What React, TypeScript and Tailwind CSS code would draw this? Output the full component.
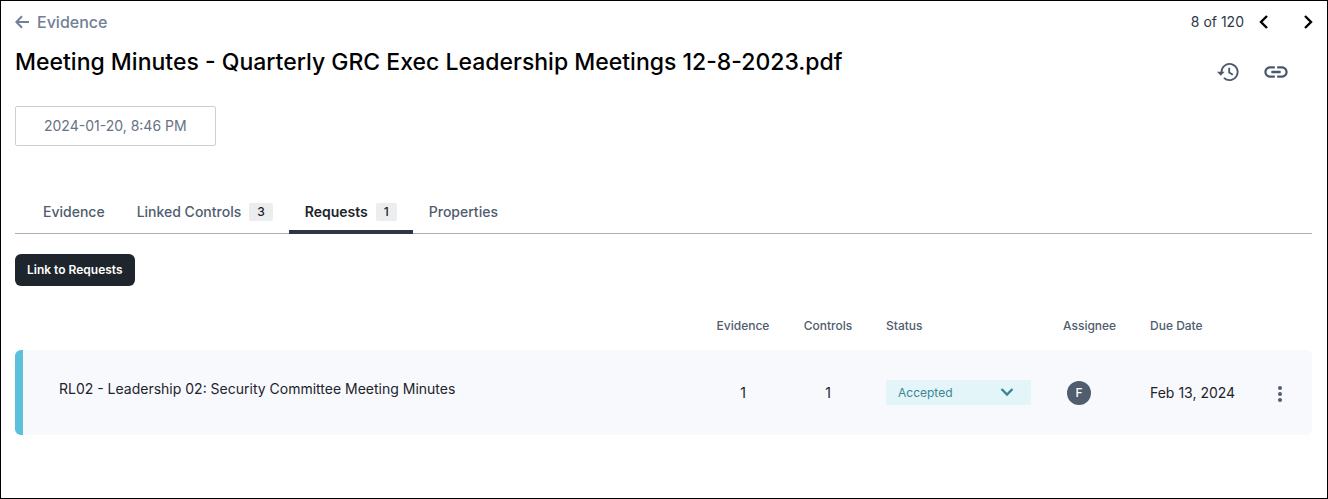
import React, { FC } from "react";
import { MdInsertLink } from "react-icons/md";

type Tab = { name: string; count?: number };

type RequestRow = {
	title: string;
	evidence: number;
	controls: number;
	status: string;
	assignee: string;
	dueDate: string;
};

const tabs: Tab[] = [
	{ name: "Evidence" },
	{ name: "Linked Controls", count: 3 },
	{ name: "Requests", count: 1 },
	{ name: "Properties" },
];

const requests: RequestRow[] = [
	{
		title: "RL02 - Leadership 02: Security Committee Meeting Minutes",
		evidence: 1,
		controls: 1,
		status: "Accepted",
		assignee: "F",
		dueDate: "Feb 13, 2024",
	},
];

const Chevron: FC<{ d: string; className: string }> = ({ d, className }) => (
	<svg viewBox="0 0 16 16" fill="none" stroke="currentColor" strokeWidth="2.4" className={className}>
		<path d={d} />
	</svg>
);

const HistoryIcon = () => (
	<svg viewBox="0 0 24 24" fill="none" stroke="currentColor" strokeWidth="1.8" className="size-6">
		<path d="M5.5 12.5a8.1 8.1 0 1 1 2.4 5.3" />
		<path d="M13.2 7.8v4.6l3.6 2.4" />
		<path d="M1 11.8h7.6L4.8 15.8z" fill="currentColor" stroke="none" />
	</svg>
);

const Header = () => (
	<header>
		<div className="flex h-[41px] items-center justify-between">
			<a href="#evidence" className="flex items-center gap-2 text-base font-medium text-[#718096]">
				<svg viewBox="0 0 14 14" fill="none" stroke="currentColor" strokeWidth="2" className="size-3.5">
					<path d="M14 7H1.5M7 1.3 1.3 7 7 12.7" />
				</svg>
				Evidence
			</a>
			<div className="-mr-1 flex items-center text-sm text-[#2d3748]">
				<span className="mr-3">8 of 120</span>
				<button aria-label="Previous" className="mr-7 text-black">
					<Chevron d="M11 2 5 8l6 6" className="size-4" />
				</button>
				<button aria-label="Next" className="text-black">
					<Chevron d="M5 2l6 6-6 6" className="size-4" />
				</button>
			</div>
		</div>
		<div className="flex justify-between">
			<h1 className="text-[23px] leading-10 font-medium text-black">
				Meeting Minutes - Quarterly GRC Exec Leadership Meetings 12-8-2023.pdf
			</h1>
			<div className="mt-4 mr-[22px] flex items-center gap-[22px] text-[#4a5a6c]">
				<button aria-label="History">
					<HistoryIcon />
				</button>
				<button aria-label="Copy link">
					<MdInsertLink className="size-7" />
				</button>
			</div>
		</div>
	</header>
);

const Tabs: FC<{ active: string }> = ({ active }) => (
	<nav role="tablist" className="mt-11 flex border-b border-[#a5afb9] pl-3">
		{tabs.map(({ name, count }) => (
			<button
				key={name}
				role="tab"
				aria-selected={name === active}
				className={
					name === active
						? "-mb-px flex h-11 items-center gap-2 border-b-4 border-[#2d3642] px-4 pt-1 text-sm font-semibold text-[#1d232b]"
						: "flex h-10 items-center gap-2 px-4 pt-1 text-sm font-medium text-[#4f5d6e]"
				}
			>
				{name}
				{count && (
					<span className="rounded-xs bg-[#ecedef] px-2 text-xs leading-[18px] font-medium text-[#1d232b]">
						{count}
					</span>
				)}
			</button>
		))}
	</nav>
);

const RequestsTable = () => (
	<table className="mt-8 w-full table-fixed border-separate border-spacing-0">
		<thead>
			<tr className="h-8 text-left align-top text-xs text-[#4f5d6e]">
				<th aria-label="Request" />
				<th className="w-[86px] text-center font-medium">Evidence</th>
				<th className="w-[84px] text-center font-medium">Controls</th>
				<th className="w-[177px] px-4 font-medium">Status</th>
				<th className="w-[87px] px-4 font-medium">Assignee</th>
				<th className="w-[114px] px-4 font-medium">Due Date</th>
				<th className="w-16" aria-label="Actions" />
			</tr>
		</thead>
		<tbody>
			{requests.map((row) => (
				<tr key={row.title} className="h-[85px] text-sm text-[#1d232b]">
					<td className="rounded-l-md border-l-8 border-[#5bc0da] bg-[#f8f9fd] pb-2 pl-9">{row.title}</td>
					<td className="bg-[#f8f9fd] text-center">{row.evidence}</td>
					<td className="bg-[#f8f9fd] text-center">{row.controls}</td>
					<td className="bg-[#f8f9fd] px-4">
						<div className="relative text-[#3a8792]">
							<select
								aria-label="Status"
								defaultValue={row.status}
								className="block h-[25px] w-full appearance-none bg-[#e3f5f9] pl-3 text-xs"
							>
								<option>{row.status}</option>
							</select>
							<Chevron
								d="M2.5 5 8 10.5 13.5 5"
								className="pointer-events-none absolute top-1 right-4 size-4"
							/>
						</div>
					</td>
					<td className="bg-[#f8f9fd] px-5">
						<span className="flex size-6 items-center justify-center rounded-full bg-[#4f5d6e] text-xs font-medium text-white">
							{row.assignee}
						</span>
					</td>
					<td className="bg-[#f8f9fd] pl-4 whitespace-nowrap">{row.dueDate}</td>
					<td className="rounded-r-md bg-[#f8f9fd] text-center">
						<button aria-label="More actions" className="align-middle text-[#4f5d6e]">
							<svg viewBox="0 0 4 16" fill="currentColor" className="h-4 w-1">
								<circle cx="2" cy="2" r="2" />
								<circle cx="2" cy="8" r="2" />
								<circle cx="2" cy="14" r="2" />
							</svg>
						</button>
					</td>
				</tr>
			))}
		</tbody>
	</table>
);

const App = () => {
	return (
		<main className="min-h-screen border border-black bg-white pr-[15px] pl-[14px] font-['Inter',sans-serif]">
			<Header />
			<div className="mt-5 flex h-10 w-fit items-center rounded-xs border border-[#cbd0d8] px-7 text-sm text-[#667385]">
				2024-01-20, 8:46 PM
			</div>
			<Tabs active="Requests" />
			<button className="mt-5 block h-8 rounded-md bg-[#1e252d] px-3 text-xs font-semibold text-white">
				Link to Requests
			</button>
			<RequestsTable />
		</main>
	);
};

export default App;
